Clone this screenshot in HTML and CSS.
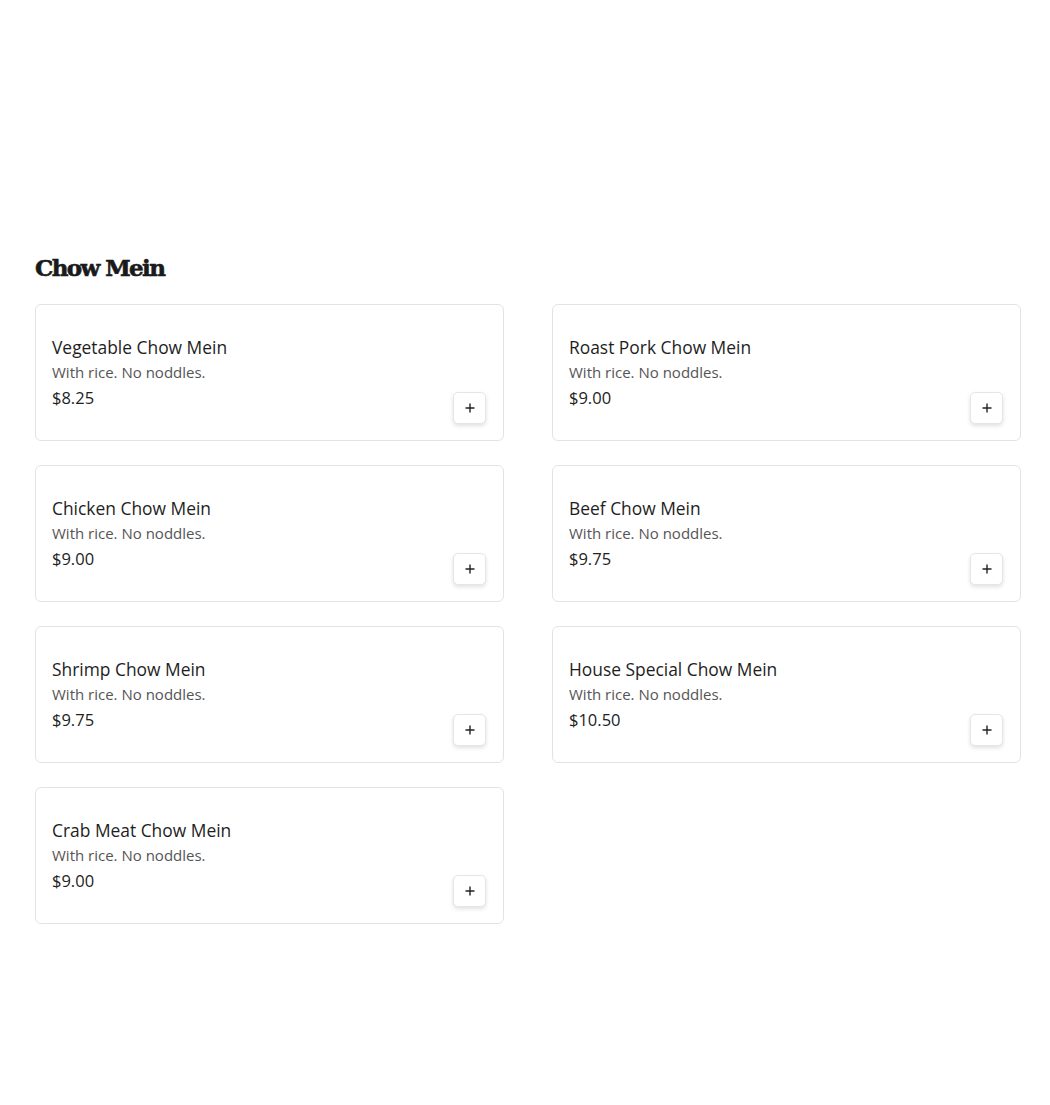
FILE: index.html
```html
<!DOCTYPE html>
<html>
<head>
<meta charset="utf-8">
<link rel="stylesheet" href="styles.css">
</head>
<body>
<section class="menu">
  <h2 class="menu-title">Chow Mein</h2>
  <div class="grid">
    <div class="card">
      <div class="info"><div class="name">Vegetable Chow Mein</div><div class="desc">With rice. No noddles.</div><div class="price">$8.25</div></div>
      <button class="add" aria-label="Add"><svg width="12" height="12" viewBox="0 0 12 12"><path d="M6 1.5v9M1.5 6h9" stroke="#222" stroke-width="1.4"/></svg></button>
    </div>
    <div class="card">
      <div class="info"><div class="name">Roast Pork Chow Mein</div><div class="desc">With rice. No noddles.</div><div class="price">$9.00</div></div>
      <button class="add" aria-label="Add"><svg width="12" height="12" viewBox="0 0 12 12"><path d="M6 1.5v9M1.5 6h9" stroke="#222" stroke-width="1.4"/></svg></button>
    </div>
    <div class="card">
      <div class="info"><div class="name">Chicken Chow Mein</div><div class="desc">With rice. No noddles.</div><div class="price">$9.00</div></div>
      <button class="add" aria-label="Add"><svg width="12" height="12" viewBox="0 0 12 12"><path d="M6 1.5v9M1.5 6h9" stroke="#222" stroke-width="1.4"/></svg></button>
    </div>
    <div class="card">
      <div class="info"><div class="name">Beef Chow Mein</div><div class="desc">With rice. No noddles.</div><div class="price">$9.75</div></div>
      <button class="add" aria-label="Add"><svg width="12" height="12" viewBox="0 0 12 12"><path d="M6 1.5v9M1.5 6h9" stroke="#222" stroke-width="1.4"/></svg></button>
    </div>
    <div class="card">
      <div class="info"><div class="name">Shrimp Chow Mein</div><div class="desc">With rice. No noddles.</div><div class="price">$9.75</div></div>
      <button class="add" aria-label="Add"><svg width="12" height="12" viewBox="0 0 12 12"><path d="M6 1.5v9M1.5 6h9" stroke="#222" stroke-width="1.4"/></svg></button>
    </div>
    <div class="card">
      <div class="info"><div class="name">House Special Chow Mein</div><div class="desc">With rice. No noddles.</div><div class="price">$10.50</div></div>
      <button class="add" aria-label="Add"><svg width="12" height="12" viewBox="0 0 12 12"><path d="M6 1.5v9M1.5 6h9" stroke="#222" stroke-width="1.4"/></svg></button>
    </div>
    <div class="card">
      <div class="info"><div class="name">Crab Meat Chow Mein</div><div class="desc">With rice. No noddles.</div><div class="price">$9.00</div></div>
      <button class="add" aria-label="Add"><svg width="12" height="12" viewBox="0 0 12 12"><path d="M6 1.5v9M1.5 6h9" stroke="#222" stroke-width="1.4"/></svg></button>
    </div>
  </div>
</section>
</body>
</html>
```
FILE: styles.css
```css
* { box-sizing: border-box; }
body {
  margin: 0;
  background: #fff;
  font-family: "Open Sans", "Noto Sans", sans-serif;
  color: #222;
}
.menu {
  padding: 253px 29px 0 35px;
}
.menu-title {
  margin: 0 0 21px;
  font-family: "DejaVu Serif", serif;
  font-weight: 700;
  font-size: 23px;
  line-height: 30px;
  letter-spacing: -1.6px;
  color: #1a1a1a;
  -webkit-text-stroke: 0.6px #1a1a1a;
}
.grid {
  display: grid;
  grid-template-columns: 469px 469px;
  column-gap: 48px;
  row-gap: 24px;
}
.card {
  height: 137px;
  border: 1px solid #e3e3e3;
  border-radius: 6px;
  padding: 30px 17px 16px 16px;
  display: flex;
  justify-content: space-between;
  align-items: flex-end;
}
.info {
  align-self: flex-start;
}
.name {
  font-size: 17.4px;
  font-weight: 500;
  line-height: 25px;
  color: #1e1e1e;
}
.desc {
  font-size: 15px;
  line-height: 25px;
  color: #555;
}
.price {
  font-size: 16.5px;
  line-height: 26px;
  color: #222;
}
.add {
  width: 33px;
  height: 32px;
  border: 1px solid #e6e6e6;
  border-radius: 5px;
  background: #fff;
  box-shadow: 0 2px 4px rgba(0,0,0,0.12);
  display: flex;
  align-items: center;
  justify-content: center;
  padding: 0;
}
```
